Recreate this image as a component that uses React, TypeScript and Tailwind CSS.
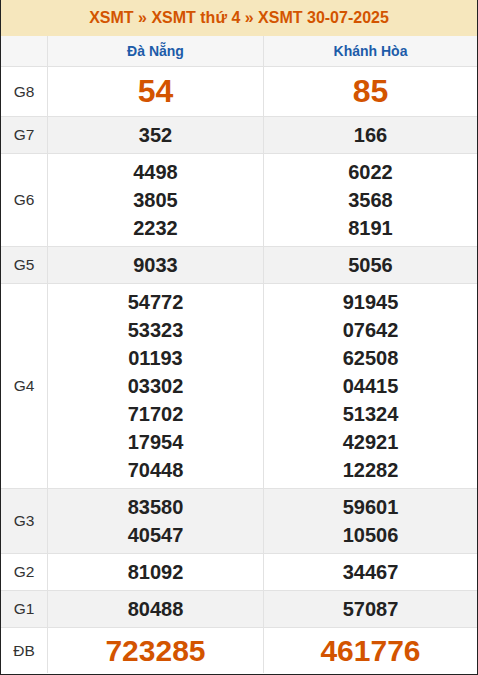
const rows: { label: string; a: string[]; b: string[]; gray?: boolean; big?: 'g8' | 'db' }[] = [
  { label: 'G8', a: ['54'], b: ['85'], big: 'g8' },
  { label: 'G7', a: ['352'], b: ['166'], gray: true },
  { label: 'G6', a: ['4498', '3805', '2232'], b: ['6022', '3568', '8191'] },
  { label: 'G5', a: ['9033'], b: ['5056'], gray: true },
  {
    label: 'G4',
    a: ['54772', '53323', '01193', '03302', '71702', '17954', '70448'],
    b: ['91945', '07642', '62508', '04415', '51324', '42921', '12282'],
  },
  { label: 'G3', a: ['83580', '40547'], b: ['59601', '10506'], gray: true },
  { label: 'G2', a: ['81092'], b: ['34467'] },
  { label: 'G1', a: ['80488'], b: ['57087'], gray: true },
  { label: 'ĐB', a: ['723285'], b: ['461776'], big: 'db' },
];

function Nums({ list, big }: { list: string[]; big?: 'g8' | 'db' }) {
  if (big === 'g8') {
    return <div className="text-[32px] leading-[41px] font-bold text-[#d35400]">{list[0]}</div>;
  }
  if (big === 'db') {
    return <div className="text-[30px] leading-[37px] font-bold text-[#d35400]">{list[0]}</div>;
  }
  return (
    <>
      {list.map((n) => (
        <div key={n} className="text-[20px] leading-[28px] font-bold text-[#222]">
          {n}
        </div>
      ))}
    </>
  );
}

export default function App() {
  return (
    <div className="w-[478px] h-[675px] bg-white font-['Liberation_Sans',Arial,sans-serif] border-x border-b border-[#222]">
      {/* title */}
      <div className="h-[36px] bg-[#f6e7bd] flex items-center justify-center text-[16px] font-bold text-[#d35400]">
        XSMT » XSMT thứ 4 » XSMT 30-07-2025
      </div>

      {/* provinces */}
      <div className="flex h-[31px] bg-[#f6f6f6] border-b border-[#e2e2e2]">
        <div className="w-[47px] border-r border-[#e2e2e2]" />
        <div className="w-[216px] border-r border-[#e2e2e2] flex items-center justify-center text-[14px] font-bold text-[#1d5ca9]">
          Đà Nẵng
        </div>
        <div className="flex-1 flex items-center justify-center text-[14px] font-bold text-[#1d5ca9]">
          Khánh Hòa
        </div>
      </div>

      {rows.map((r, i) => (
        <div
          key={r.label}
          className={`flex ${r.gray ? 'bg-[#f2f2f2]' : 'bg-white'} ${i < rows.length - 1 ? 'border-b border-[#e2e2e2]' : ''}`}
        >
          <div className="w-[47px] border-r border-[#e2e2e2] flex items-center justify-center text-[15.5px] text-[#333]">
            {r.label}
          </div>
          <div className="w-[216px] border-r border-[#e2e2e2] py-1 flex flex-col items-center">
            <Nums list={r.a} big={r.big} />
          </div>
          <div className="flex-1 py-1 flex flex-col items-center">
            <Nums list={r.b} big={r.big} />
          </div>
        </div>
      ))}
    </div>
  );
}
